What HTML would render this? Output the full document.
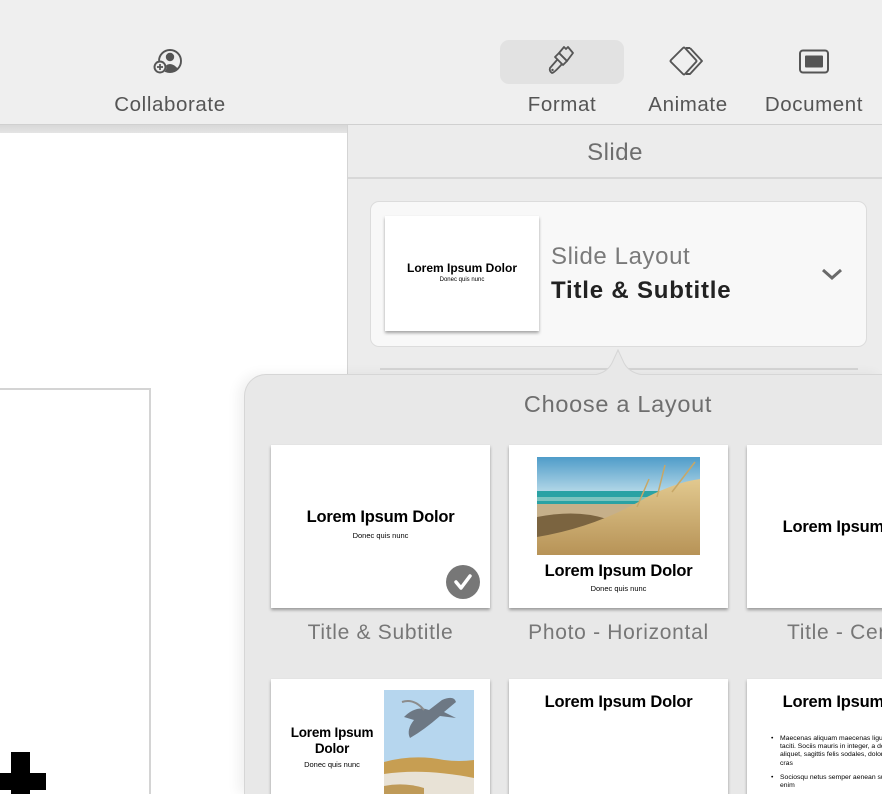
<!DOCTYPE html>
<html><head><meta charset="utf-8">
<style>
*{box-sizing:border-box;margin:0;padding:0}
html,body{width:882px;height:794px;overflow:hidden}
body{position:relative;background:#efefef;font-family:"Liberation Sans",Helvetica,Arial,sans-serif}
#wrap{position:absolute;left:0;top:0;width:882px;height:794px;overflow:hidden}
.abs{position:absolute}
.tb{left:0;top:0;width:882px;height:125px;background:#efefef;border-bottom:1px solid #d0d0d0}
.tl{font-size:20.5px;color:#555;top:93px;text-align:center;letter-spacing:.6px;white-space:nowrap}
.canvas{left:0;top:125px;width:347px;height:669px;background:#fff;overflow:hidden}
.canvas .bar{left:0;top:0;width:347px;height:8px;background:linear-gradient(#d8d8d8,#e4e4e4)}
.panel{left:347px;top:125px;width:535px;height:669px;background:#ececec;border-left:1px solid #d4d4d4}
.thumb{background:#fff;box-shadow:0 2px 3px rgba(0,0,0,.35);text-align:center;color:#000;overflow:hidden}
.t1{font-size:16.5px;font-weight:bold;letter-spacing:-.2px;white-space:nowrap}
.t2{font-size:7.5px;white-space:nowrap}
.lab{font-size:21px;color:#777;top:621px;text-align:center;letter-spacing:.7px;white-space:nowrap}
.pop{left:244px;top:374px;width:638px;height:420px;overflow:hidden}
</style></head><body><div id="wrap">
<div class="abs tb"></div>
<svg class="abs" style="left:150px;top:46px" width="36" height="32" viewBox="0 0 36 32">
<circle cx="20" cy="15" r="11" fill="none" stroke="#555" stroke-width="1.9"/>
<circle cx="20" cy="11" r="4.2" fill="#555"/>
<path d="M12 23 Q20 13 28 23 Q20 29 12 23Z" fill="#555"/>
<circle cx="10" cy="21" r="6.5" fill="#efefef"/>
<circle cx="10" cy="21" r="5.5" fill="none" stroke="#555" stroke-width="1.9"/>
<path d="M10 18v6M7 21h6" stroke="#555" stroke-width="1.7"/>
</svg>
<div class="abs tl" style="left:100px;width:140px">Collaborate</div>
<div class="abs" style="left:500px;top:40px;width:124px;height:44px;background:#e2e2e2;border-radius:9px"></div>
<svg class="abs" style="left:540px;top:40px" width="44" height="44" viewBox="0 0 44 44">
<path d="M19 13 L24 7 L26 9 L28 7 L33 13 L27 21 Z" fill="none" stroke="#555" stroke-width="1.8" stroke-linejoin="round"/>
<path d="M19 13 L27 21 L23 25 L15 17 Z" fill="none" stroke="#555" stroke-width="1.8" stroke-linejoin="round"/>
<path d="M17 20 L10 28 Q9 31 12 33 Q14 33 22 24" fill="none" stroke="#555" stroke-width="1.8" stroke-linejoin="round"/>
<circle cx="12.5" cy="30" r="1.2" fill="#555"/>
</svg>
<div class="abs tl" style="left:500px;width:124px">Format</div>
<svg class="abs" style="left:666px;top:44px" width="44" height="34" viewBox="0 0 44 34">
<path d="M24 4 L36 17 L24 30 L20 30 M24 4 L20 4" fill="none" stroke="#555" stroke-width="1.9" stroke-linejoin="round"/>
<path d="M17 4 Q18 3 19 4 L30 16 Q31 17 30 18 L19 30 Q18 31 17 30 L5 18 Q4 17 5 16 Z" fill="#efefef" stroke="#555" stroke-width="1.9" stroke-linejoin="round"/>
</svg>
<div class="abs tl" style="left:630px;width:116px">Animate</div>
<svg class="abs" style="left:798px;top:49px" width="33" height="26" viewBox="0 0 33 26">
<rect x="2" y="1.5" width="28" height="22" rx="3" fill="none" stroke="#555" stroke-width="2"/>
<rect x="7" y="6.5" width="18" height="12" rx="1" fill="#555"/>
</svg>
<div class="abs tl" style="left:752px;width:124px">Document</div>

<div class="abs canvas"><div class="abs bar"></div>
<div class="abs" style="left:-2px;top:263px;width:153px;height:420px;border:2px solid #d4d4d4;background:#fff"></div>
<div class="abs" style="left:11px;top:627px;width:19px;height:42px;background:#000"></div>
<div class="abs" style="left:0;top:648px;width:46px;height:17px;background:#000"></div>
</div>

<div class="abs panel">
<div class="abs" style="left:0;top:0;width:534px;height:54px;border-bottom:2px solid #d8d8d8;text-align:center;font-size:24px;color:#6e6e6e;line-height:56px;letter-spacing:.5px">Slide</div>
<div class="abs" style="left:22px;top:76px;width:497px;height:146px;background:#f8f8f8;border:1px solid #dcdcdc;border-radius:9px"></div>
<div class="abs thumb" style="left:37px;top:91px;width:154px;height:115px">
<div style="margin-top:45px;font-size:12px;font-weight:bold;white-space:nowrap">Lorem Ipsum Dolor</div>
<div style="font-size:6px;margin-top:2px">Donec quis nunc</div></div>
<div class="abs" style="left:203px;top:118px;font-size:24px;color:#7a7a7a;letter-spacing:.6px">Slide Layout</div>
<div class="abs" style="left:203px;top:152px;font-size:24px;color:#222;font-weight:bold;letter-spacing:.8px">Title &amp; Subtitle</div>
<svg class="abs" style="left:472px;top:141px" width="24" height="16" viewBox="0 0 24 16"><path d="M3 4 L12 12 L21 4" fill="none" stroke="#6a6a6a" stroke-width="3"/></svg>
<div class="abs" style="left:32px;top:243px;width:478px;height:2px;background:#d4d4d4"></div>
</div>

<div class="abs" style="left:244px;top:374px;width:638px;height:420px;background:#e8e8e8;border-radius:22px 0 0 0;border-top:1px solid #d6d6d6;border-left:1px solid #d6d6d6;box-shadow:-6px 0 12px rgba(0,0,0,.06)"></div>
<svg class="abs" style="left:588px;top:347px" width="62" height="29" viewBox="0 0 62 29"><path d="M0 28.5 Q18 28 24 16 L30 3 L36 16 Q42 28 62 28.5 L62 29 L0 29Z" fill="#e8e8e8" stroke="#d6d6d6" stroke-width="1"/><rect x="0" y="28" width="62" height="2" fill="#e8e8e8"/></svg>

<div class="abs pop">
<div class="abs" style="left:214px;top:17px;width:320px;text-align:center;font-size:23.5px;color:#6e6e6e;letter-spacing:.7px">Choose a Layout</div>

<div class="abs thumb" style="left:27px;top:71px;width:219px;height:163px">
<div class="t1" style="margin-top:63px">Lorem Ipsum Dolor</div><div class="t2" style="margin-top:4px">Donec quis nunc</div>
<div class="abs" style="left:175px;top:120px;width:34px;height:34px;border-radius:50%;background:#777"></div>
<svg class="abs" style="left:175px;top:120px" width="34" height="34" viewBox="0 0 34 34"><path d="M10 17 L15 23 L24 11" fill="none" stroke="#fff" stroke-width="3.5" stroke-linecap="round" stroke-linejoin="round"/></svg>
</div>
<div class="abs thumb" style="left:265px;top:71px;width:219px;height:163px">
<svg class="abs" style="left:28px;top:12px" width="163" height="98" viewBox="0 0 163 98">
<defs><linearGradient id="sk" x1="0" y1="0" x2="0" y2="1"><stop offset="0" stop-color="#4f9cc9"/><stop offset="1" stop-color="#b6d9e8"/></linearGradient>
<linearGradient id="gr" x1="0" y1="0" x2="0" y2="1"><stop offset="0" stop-color="#e2c98f"/><stop offset="1" stop-color="#b79357"/></linearGradient></defs>
<rect width="163" height="36" fill="url(#sk)"/>
<rect y="34" width="163" height="14" fill="#2aa2a4"/>
<rect y="40" width="163" height="4" fill="#9fd1cb" opacity=".7"/>
<rect y="47" width="163" height="51" fill="#c6b08a"/>
<path d="M0 60 Q40 52 70 62 L70 98 L0 98Z" fill="#7b6440"/>
<path d="M0 98 L0 80 Q60 70 110 40 Q140 25 163 22 L163 98Z" fill="url(#gr)"/>
<path d="M120 40 L128 8 M135 35 L158 5 M100 50 L112 22" stroke="#c7a766" stroke-width="1.5"/>
</svg>
<div class="t1" style="position:absolute;top:117px;width:100%">Lorem Ipsum Dolor</div><div class="t2" style="position:absolute;top:139px;width:100%">Donec quis nunc</div>
</div>
<div class="abs thumb" style="left:503px;top:71px;width:219px;height:163px">
<div class="t1" style="margin-top:73px">Lorem Ipsum Dolor</div></div>

<div class="abs lab" style="left:17px;top:247px;width:239px">Title &amp; Subtitle</div>
<div class="abs lab" style="left:255px;top:247px;width:239px">Photo - Horizontal</div>
<div class="abs lab" style="left:543px;top:247px;width:140px;text-align:left">Title - Center</div>

<div class="abs thumb" style="left:27px;top:305px;width:219px;height:140px">
<svg class="abs" style="left:113px;top:11px" width="90" height="120" viewBox="0 0 90 120">
<rect width="90" height="120" fill="#b6d6ee"/>
<path d="M0 72 Q30 64 60 70 Q75 72 90 70 L90 120 L0 120Z" fill="#c79e52"/>
<path d="M0 84 Q40 78 90 88 L90 120 L0 120Z" fill="#e8e2d6"/>
<path d="M0 96 Q20 92 40 98 L40 120 L0 120Z" fill="#bf9a58"/>
<path d="M20 27 Q32 15 45 20 L58 10 Q70 5 72 12 L60 22 L72 28 L56 26 Q40 40 26 48 Q22 40 30 30Z" fill="#6d7884"/>
<path d="M40 20 Q30 8 18 12" stroke="#8c8c8c" stroke-width="2" fill="none"/>
</svg>
<div class="t1" style="position:absolute;left:6px;top:46px;width:110px;font-size:13.5px;line-height:16px;white-space:normal">Lorem Ipsum<br>Dolor</div>
<div class="t2" style="position:absolute;left:6px;top:81px;width:110px">Donec quis nunc</div>
</div>
<div class="abs thumb" style="left:265px;top:305px;width:219px;height:140px">
<div class="t1" style="margin-top:14px">Lorem Ipsum Dolor</div></div>
<div class="abs thumb" style="left:503px;top:305px;width:219px;height:140px;text-align:left">
<div class="t1" style="margin-top:14px;text-align:center">Lorem Ipsum Dolor</div>
<div class="abs" style="left:24px;top:56px;font-size:6.8px;line-height:8.2px;white-space:nowrap">•</div>
<div class="abs" style="left:33px;top:56px;font-size:6.8px;line-height:8.2px;white-space:nowrap">Maecenas aliquam maecenas ligula nostra, accumsan<br>taciti. Sociis mauris in integer, a dolor netus non dui<br>aliquet, sagittis felis sodales, dolor metus<br>cras</div>
<div class="abs" style="left:24px;top:95px;font-size:6.8px;line-height:8.2px;white-space:nowrap">•</div>
<div class="abs" style="left:33px;top:95px;font-size:6.8px;line-height:8.2px;white-space:nowrap">Sociosqu netus semper aenean suspendisse<br>enim</div>
</div>
</div>
</div></body></html>
